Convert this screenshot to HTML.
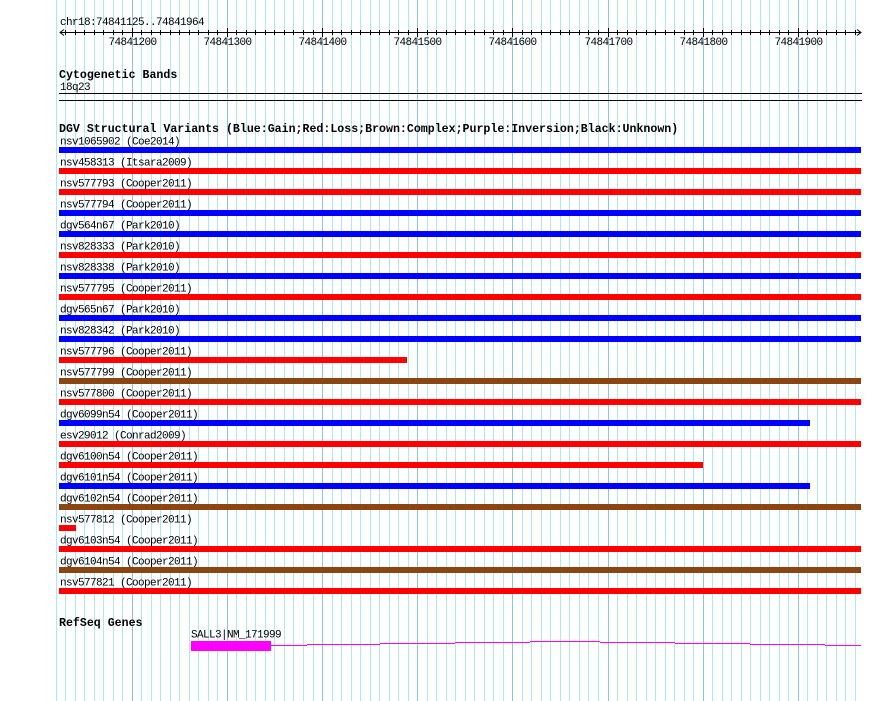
<!DOCTYPE html>
<html><head><style>html,body{margin:0;padding:0;background:#fff}svg{display:block}</style></head>
<body>
<svg id="s" width="890" height="701" xmlns="http://www.w3.org/2000/svg" font-family="Liberation Mono, monospace">
<g id="grid"></g>
<g id="content"></g>
</svg>
<script>
const NS="http://www.w3.org/2000/svg";
const g=document.getElementById('grid'),c=document.getElementById('content');
function el(p,tag,a,t){const e=document.createElementNS(NS,tag);for(const k in a)e.setAttribute(k,a[k]);if(t)e.textContent=t;p.appendChild(e);return e;}
const S={'font-size':'11px','letter-spacing':'-0.6px'};
function txt(x,y,t,extra){el(c,'text',Object.assign({x:x,y:y},S,extra||{}),t);}
const X=bp=>131.7+(bp-74841200)*0.9516;
for(let bp=74841120;bp<=74841960;bp+=10){const x=Math.round(X(bp))+0.5;const maj=bp%100==0;
el(g,'line',{x1:x,x2:x,y1:0,y2:701,stroke:maj?'#88c4f0':'#ace8f0','stroke-width':1});}
txt(60,25,'chr18:74841125..74841964');
el(c,'line',{x1:60,x2:861,y1:32.5,y2:32.5,stroke:'#000'});
el(c,'path',{d:'M64 29.5L60 32.5L64 35.5M857 29.5L861 32.5L857 35.5',stroke:'#000',fill:'none'});
for(let bp=74841130;bp<=74841960;bp+=10){const x=Math.round(X(bp))+0.5;const maj=bp%100==0;
el(c,'line',{x1:x,x2:x,y1:maj?28:30,y2:maj?37:35,stroke:'#000'});
if(maj)txt(x,45,String(bp),{'text-anchor':'middle'});}
el(c,'text',{x:59,y:78,'font-size':'11.6px','font-weight':'bold'},'Cytogenetic Bands');
txt(60,90,'18q23');
el(c,'rect',{x:59,y:93,width:803,height:1,fill:'#000'});
el(c,'rect',{x:59,y:100,width:803,height:1,fill:'#000'});
el(c,'text',{x:59,y:132,'font-size':'11.6px','font-weight':'bold'},'DGV Structural Variants (Blue:Gain;Red:Loss;Brown:Complex;Purple:Inversion;Black:Unknown)');
const B='#0000ff',R='#ff0000',N='#8b4513';
const rows=[['nsv1065902 (Coe2014)',B,861],['nsv458313 (Itsara2009)',R,861],['nsv577793 (Cooper2011)',R,861],['nsv577794 (Cooper2011)',B,861],['dgv564n67 (Park2010)',B,861],['nsv828333 (Park2010)',R,861],['nsv828338 (Park2010)',B,861],['nsv577795 (Cooper2011)',R,861],['dgv565n67 (Park2010)',B,861],['nsv828342 (Park2010)',B,861],['nsv577796 (Cooper2011)',R,407],['nsv577799 (Cooper2011)',N,861],['nsv577800 (Cooper2011)',R,861],['dgv6099n54 (Cooper2011)',B,810],['esv29012 (Conrad2009)',R,861],['dgv6100n54 (Cooper2011)',R,703],['dgv6101n54 (Cooper2011)',B,810],['dgv6102n54 (Cooper2011)',N,861],['nsv577812 (Cooper2011)',R,76],['dgv6103n54 (Cooper2011)',R,861],['dgv6104n54 (Cooper2011)',N,861],['nsv577821 (Cooper2011)',R,861]];
rows.forEach((r,i)=>{const y=147+21*i;txt(60,y-2.5,r[0]);el(c,'rect',{x:59,y:y,width:r[2]-59,height:6,fill:r[1]});});
el(c,'text',{x:59,y:626,'font-size':'11.6px','font-weight':'bold'},'RefSeq Genes');
txt(191,637.5,'SALL3|NM_171999');
el(c,'rect',{x:191,y:641,width:80,height:10,fill:'#ff00ff'});
const segs=[[270,307,645],[307,380,644],[380,455,643],[455,530,642],[530,600,641],[600,675,642],[675,750,643],[750,825,644],[825,861,645]];
segs.forEach(s=>el(c,'rect',{x:s[0],y:s[2],width:s[1]-s[0],height:1,fill:'#ff00ff'}));
</script>
</body></html>
